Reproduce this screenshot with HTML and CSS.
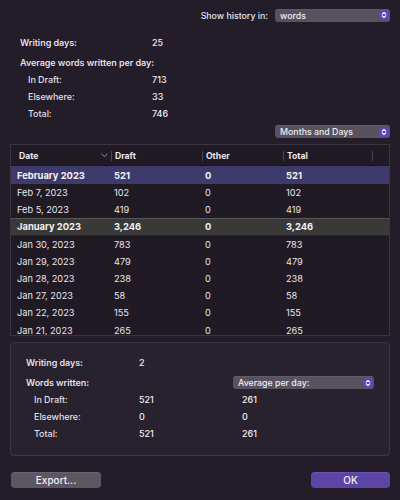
FILE: index.html
```html
<!DOCTYPE html>
<html>
<head>
<meta charset="utf-8">
<link rel="stylesheet" href="styles.css">
</head>
<body>
<div class="top">
  <span class="top-label">Show history in:</span>
  <div class="popup popup-wide">
    <span class="popup-text">words</span>
    <svg class="stepper" width="10" height="10" viewBox="0 0 10 10"><rect width="10" height="10" rx="2.5" fill="#5c46b8"/><path d="M3.2 4.1 L5 2.5 L6.8 4.1 M3.2 5.9 L5 7.5 L6.8 5.9" fill="none" stroke="#fff" stroke-width="1.1" stroke-linecap="round" stroke-linejoin="round"/></svg>
  </div>
</div>

<div class="stats">
  <div class="srow gap"><span class="lbl">Writing days:</span><span class="val">25</span></div>
  <div class="srow"><span class="lbl span2">Average words written per day:</span></div>
  <div class="srow"><span class="lbl sub">In Draft:</span><span class="val">713</span></div>
  <div class="srow"><span class="lbl sub">Elsewhere:</span><span class="val">33</span></div>
  <div class="srow"><span class="lbl sub">Total:</span><span class="val">746</span></div>
</div>

<div class="range-bar">
  <div class="popup popup-wide">
    <span class="popup-text">Months and Days</span>
    <svg class="stepper" width="10" height="10" viewBox="0 0 10 10"><rect width="10" height="10" rx="2.5" fill="#5c46b8"/><path d="M3.2 4.1 L5 2.5 L6.8 4.1 M3.2 5.9 L5 7.5 L6.8 5.9" fill="none" stroke="#fff" stroke-width="1.1" stroke-linecap="round" stroke-linejoin="round"/></svg>
  </div>
</div>

<div class="table">
  <div class="thead">
    <div class="th th-date"><span>Date</span><svg class="sort" width="7" height="5" viewBox="0 0 7 5"><path d="M0.8 1 L3.5 3.8 L6.2 1" fill="none" stroke="#9a95a0" stroke-width="0.9" stroke-linecap="round" stroke-linejoin="round"/></svg></div>
    <div class="th">Draft</div>
    <div class="th">Other</div>
    <div class="th">Total</div>
    <div class="th th-end"></div>
  </div>
  <div class="tbody">
    <div class="tr month sel"><span>February 2023</span><span>521</span><span>0</span><span>521</span></div>
    <div class="tr"><span>Feb 7, 2023</span><span>102</span><span>0</span><span>102</span></div>
    <div class="tr"><span>Feb 5, 2023</span><span>419</span><span>0</span><span>419</span></div>
    <div class="tr month grp"><span>January 2023</span><span>3,246</span><span>0</span><span>3,246</span></div>
    <div class="tr"><span>Jan 30, 2023</span><span>783</span><span>0</span><span>783</span></div>
    <div class="tr"><span>Jan 29, 2023</span><span>479</span><span>0</span><span>479</span></div>
    <div class="tr"><span>Jan 28, 2023</span><span>238</span><span>0</span><span>238</span></div>
    <div class="tr"><span>Jan 27, 2023</span><span>58</span><span>0</span><span>58</span></div>
    <div class="tr"><span>Jan 22, 2023</span><span>155</span><span>0</span><span>155</span></div>
    <div class="tr"><span>Jan 21, 2023</span><span>265</span><span>0</span><span>265</span></div>
  </div>
</div>

<div class="panel">
  <div class="prow gap"><span class="lbl">Writing days:</span><span class="val">2</span><span></span></div>
  <div class="prow"><span class="lbl">Words written:</span><span></span>
    <div class="popup popup-avg">
      <span class="popup-text">Average per day:</span>
      <svg class="stepper" width="10" height="10" viewBox="0 0 10 10"><rect width="10" height="10" rx="2.5" fill="#5c46b8"/><path d="M3.2 4.1 L5 2.5 L6.8 4.1 M3.2 5.9 L5 7.5 L6.8 5.9" fill="none" stroke="#fff" stroke-width="1.1" stroke-linecap="round" stroke-linejoin="round"/></svg>
    </div>
  </div>
  <div class="prow"><span class="lbl sub">In Draft:</span><span class="val">521</span><span class="val v3">261</span></div>
  <div class="prow"><span class="lbl sub">Elsewhere:</span><span class="val">0</span><span class="val v3">0</span></div>
  <div class="prow"><span class="lbl sub">Total:</span><span class="val">521</span><span class="val v3">261</span></div>
</div>

<div class="buttons">
  <button class="btn btn-export">Export...</button>
  <button class="btn btn-ok">OK</button>
</div>
</body>
</html>
```

FILE: styles.css
```css
* { box-sizing: border-box; }

html, body {
  margin: 0;
  padding: 0;
  width: 400px;
  height: 500px;
  overflow: hidden;
  background: #231d29;
  color: #e7e4ea;
  font-family: Inter, "Liberation Sans", sans-serif;
  font-size: 9px;
}

/* top selector */
.top {
  display: flex;
  justify-content: flex-end;
  align-items: center;
  gap: 7px;
  margin-top: 8px;
  padding-right: 10px;
  height: 14px;
}
.top-label {
  color: #e4e1e7;
  font-size: 8.8px;
  font-weight: 500;
}

.popup {
  display: flex;
  align-items: center;
  justify-content: space-between;
  height: 13px;
  padding: 0 1.5px 0 5px;
  background: #58515e;
  border-radius: 3px;
  box-shadow: inset 0 0.5px 0 rgba(255,255,255,0.12);
  color: #eeecf0;
  font-size: 8.8px;
  font-weight: 500;
}
.popup-wide { width: 115px; }
.popup-text { line-height: 13px; }
.stepper { display: block; flex: none; }

/* summary stats */
.stats {
  padding: 12px 0 0 20px;
}
.srow {
  display: grid;
  grid-template-columns: 132px auto;
  height: 17px;
  align-items: center;
}
.srow.gap { margin-bottom: 3px; }
.lbl {
  font-size: 9px;
  font-weight: 600;
  color: #e2dfe5;
  white-space: nowrap;
  letter-spacing: -0.05px;
}
.lbl.sub { padding-left: 8px; font-weight: 500; }
.lbl.span2 { grid-column: 1 / 3; }
.val { font-size: 9px; font-weight: 500; color: #eeecf0; }

.range-bar {
  display: flex;
  justify-content: flex-end;
  padding-right: 10px;
  margin-top: 3px;
}

/* table */
.table {
  margin: 6px 10px 0 10px;
  height: 192px;
  border: 1px solid #3a3440;
  background: #201a25;
  overflow: hidden;
}
.thead, .tr {
  display: grid;
  grid-template-columns: 100px 91px 81px 89px 1fr;
}
.thead {
  height: 21px;
  align-items: center;
  border-bottom: 1px solid #19141d;
}
.th {
  position: relative;
  height: 21px;
  display: flex;
  align-items: center;
  padding-left: 4px;
  font-size: 8.6px;
  font-weight: 700;
  color: #ebe8ee;
}
.th-date { padding-left: 8px; justify-content: space-between; padding-right: 3px; }
.sort { display: block; }
.th + .th::before {
  content: "";
  position: absolute;
  left: 0;
  top: 6px;
  width: 1px;
  height: 10px;
  background: #4a4451;
}
.tr {
  height: 17.2px;
  align-items: center;
  font-size: 9.2px;
  color: #e9e6ec;
}
.tr span { padding-left: 3px; white-space: nowrap; }
.tr span:first-child { padding-left: 6px; }
.tr.month { font-weight: 700; font-size: 9.4px; color: #f3f1f5; }
.tr.sel { background: #3f3a6c; height: 18px; }
.tr.grp {
  background: #393937;
  border-top: 1px solid #57575a;
  border-bottom: 1px solid #2a2a2b;
}

/* bottom panel */
.panel {
  margin: 6px 10px 0 10px;
  height: 114px;
  border: 1px solid #3d3743;
  border-radius: 4px;
  background: #28222e;
  padding: 11px 0 0 15px;
}
.prow {
  display: grid;
  grid-template-columns: 113px 94px 141px;
  height: 17px;
  align-items: center;
}
.prow.gap { margin-bottom: 3px; }
.v3 { padding-left: 9px; }
.popup-avg { width: 141px; }

/* buttons */
.buttons {
  display: flex;
  justify-content: space-between;
  padding: 0 10px 0 11px;
  margin-top: 16px;
}
.btn {
  height: 16px;
  border: none;
  border-radius: 4px;
  font-family: Inter, "Liberation Sans", sans-serif;
  font-size: 10px;
  font-weight: 500;
  color: #f2f0f4;
  padding: 0;
  line-height: 16px;
}
.btn-export {
  width: 90px;
  background: #5b5660;
  box-shadow: inset 0 0.5px 0 rgba(255,255,255,0.15);
}
.btn-ok {
  width: 79px;
  background: #5d45a8;
  box-shadow: inset 0 0.5px 0 rgba(255,255,255,0.15);
}
```
